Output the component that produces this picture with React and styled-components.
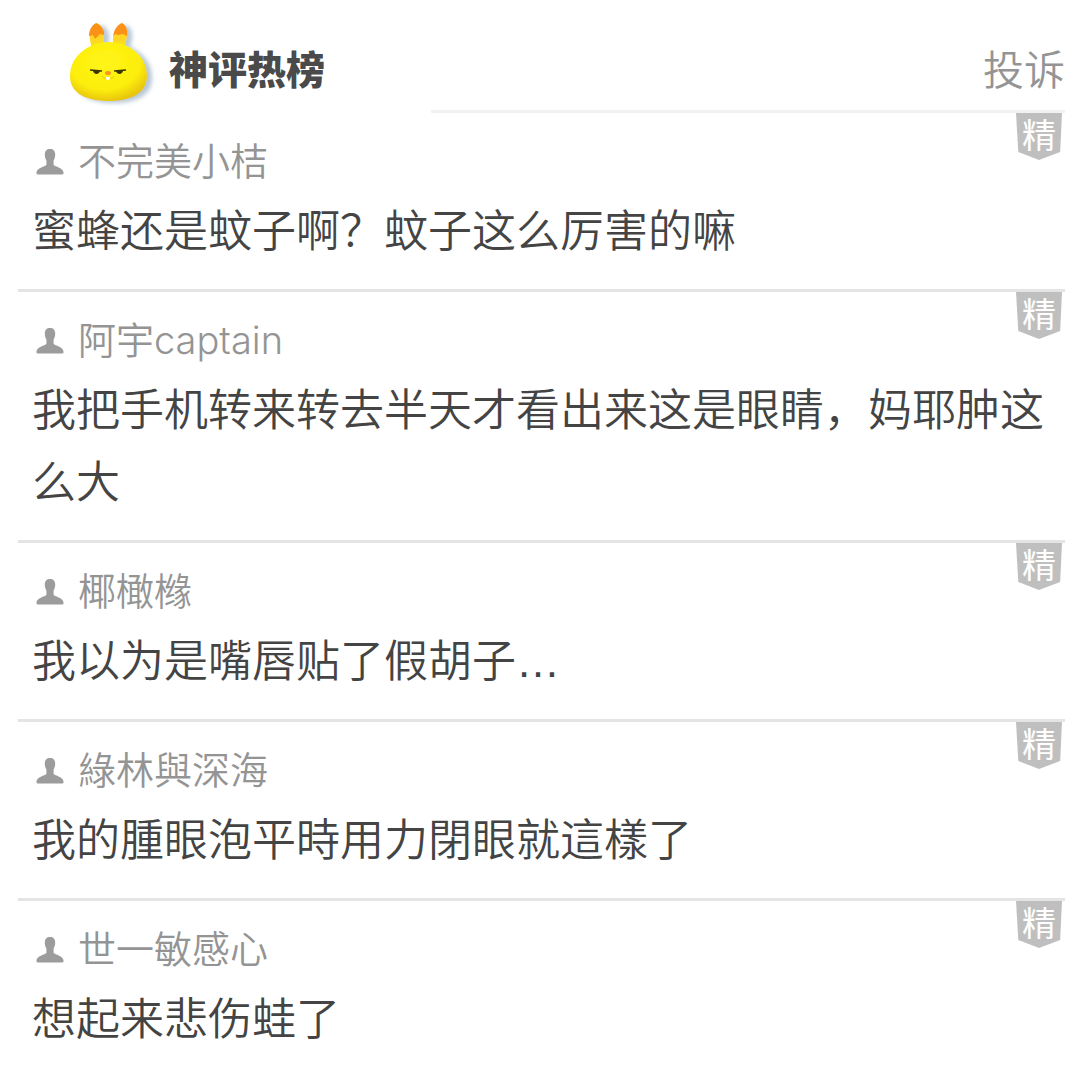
import React from 'react';
import styled, { createGlobalStyle } from 'styled-components';

const GlobalStyle = createGlobalStyle`
  body {
    margin: 0;
    background: #fff;
    color: #444;
    font-family: Inter, 'Noto Sans CJK SC', sans-serif;
  }
`;

const Page = styled.main`
  padding: 0 15px 0 18px;
`;

const Header = styled.header`
  display: flex;
  align-items: center;
  box-sizing: border-box;
  height: 110px;
  padding: 14px 0 0 48px;
`;

const Title = styled.h1`
  flex: 1;
  margin: 16px 0 0 11px;
  font-size: 39px;
  line-height: 50px;
  font-weight: 900;
  color: #4a4a4a;
`;

const Report = styled.a`
  margin-top: 16px;
  font-size: 41px;
  line-height: 50px;
  font-weight: 350;
  color: #949494;
  text-decoration: none;
`;

const HeaderLine = styled.div`
  height: 3px;
  margin-left: 413px;
  background: #f2f2f2;
`;

const List = styled.ul`
  margin: 0;
  padding: 0;
  list-style: none;
`;

const Comment = styled.li`
  position: relative;
  padding: 20px 14px 21px;
  border-bottom: 3px solid #e4e4e4;

  &:last-child {
    border-bottom: 0;
  }
`;

const Author = styled.div`
  display: flex;
  align-items: center;
  gap: 14px;
  margin-bottom: 7px;
  font-size: 38px;
  line-height: 56px;
  font-weight: 350;
  color: #949494;

  svg {
    margin-left: 4px;
  }
`;

const Text = styled.p`
  margin: 0;
  font-family: 'Liberation Sans', 'Noto Sans CJK SC', sans-serif;
  font-size: 44px;
  line-height: 72px;
  font-weight: 350;
`;

const Badge = styled.span`
  position: absolute;
  top: 0;
  right: 3px;
  width: 46px;
  height: 47px;
  background: #bfbfbf;
  clip-path: polygon(0 0, 100% 0, 96% 83%, 50% 100%, 5% 83%);
  color: #fff;
  font-size: 34px;
  line-height: 46px;
  font-weight: 400;
  text-align: center;
`;

const Mascot = () => (
  <svg width="92" height="90" viewBox="0 0 92 90" aria-hidden="true">
    <defs>
      <radialGradient id="body" cx="0.45" cy="0.35" r="0.7">
        <stop offset="0" stopColor="#fff51a" />
        <stop offset="0.65" stopColor="#fdee08" />
        <stop offset="1" stopColor="#e3bd08" />
      </radialGradient>
      <linearGradient id="ear" x1="0" y1="0" x2="0" y2="1">
        <stop offset="0.5" stopColor="#ffd428" />
        <stop offset="1" stopColor="#fbe312" />
      </linearGradient>
      <filter id="shadow" x="-20%" y="-20%" width="150%" height="150%">
        <feDropShadow dx="5" dy="2" stdDeviation="2" floodColor="#86a3bb" floodOpacity="0.6" />
      </filter>
    </defs>
    <g filter="url(#shadow)">
      <path d="M26 33C25 26 23 22 24 18C25 12 28 7 31 6C36 9 39 14 38 20L37 33Z" fill="url(#ear)" />
      <path d="M48 33C47 26 46 22 48 17C50 11 53 7 56 6C60 9 62 14 61 20L58 33Z" fill="url(#ear)" />
      <path d="M43 25C62 25 81 38 81 59C81 77 64 84 43 84C21 84 4 77 4 59C4 38 24 25 43 25Z" fill="url(#body)" />
    </g>
    <path d="M23 19C23 13 26 8 30 6C35 8 39 13 38 18L34 17L29 22L27 18Z" fill="#fb9117" />
    <path d="M47 19C48 13 51 8 56 6C60 8 62 13 61 19L57 17L52 18L49 17Z" fill="#fb9117" />
    <path d="M24 53L36 54" stroke="#3b3505" strokeWidth="1.5" />
    <path d="M27 54C28 58 33 58 34 54Z" fill="#3b3505" />
    <path d="M48 54L60 53" stroke="#3b3505" strokeWidth="1.5" />
    <path d="M50 54C51 58 56 58 57 54Z" fill="#3b3505" />
    <path d="M36 59Q39 63 42 60Q46 63 48 59" fill="none" stroke="#e7c70b" strokeWidth="1" />
    <ellipse cx="42" cy="56" rx="3" ry="2" fill="#ff941f" />
    <path d="M40 60h4v2q-2 2-4 0Z" fill="#fff" />
  </svg>
);

const UserIcon = () => (
  <svg width="28" height="28" viewBox="0 0 28 28" aria-hidden="true">
    <path
      d="M14 2C17.300 2 19.200 4 19.200 7.500C19.200 10 18.600 11.800 17.600 13.500V18C19 19.500 27.500 21 27.500 25.500V26.500Q27.500 27.500 26 27.500H2Q.5 27.500 .5 26.500V25.500C.5 21 9 19.500 10.400 18V13.500C9.400 11.800 8.800 10 8.800 7.500C8.800 4 10.700 2 14 2Z"
      fill="#9c9c9c"
    />
  </svg>
);

const comments = [
  { author: '不完美小桔', text: '蜜蜂还是蚊子啊？蚊子这么厉害的嘛' },
  { author: '阿宇captain', text: '我把手机转来转去半天才看出来这是眼睛，妈耶肿这么大' },
  { author: '椰橄橼', text: '我以为是嘴唇贴了假胡子…' },
  { author: '綠林與深海', text: '我的腫眼泡平時用力閉眼就這樣了' },
  { author: '世一敏感心', text: '想起来悲伤蛙了' },
];

const CommentItem = ({ author, text }) => {
  return (
    <Comment>
      <Badge>精</Badge>
      <Author>
        <UserIcon />
        <span>{author}</span>
      </Author>
      <Text>{text}</Text>
    </Comment>
  );
};

const App = () => {
  return (
    <Page lang="zh-CN">
      <GlobalStyle />
      <Header>
        <Mascot />
        <Title>神评热榜</Title>
        <Report href="#report">投诉</Report>
      </Header>
      <HeaderLine />
      <List>
        {comments.map((comment) => (
          <CommentItem key={comment.author} {...comment} />
        ))}
      </List>
    </Page>
  );
};

export default App;
